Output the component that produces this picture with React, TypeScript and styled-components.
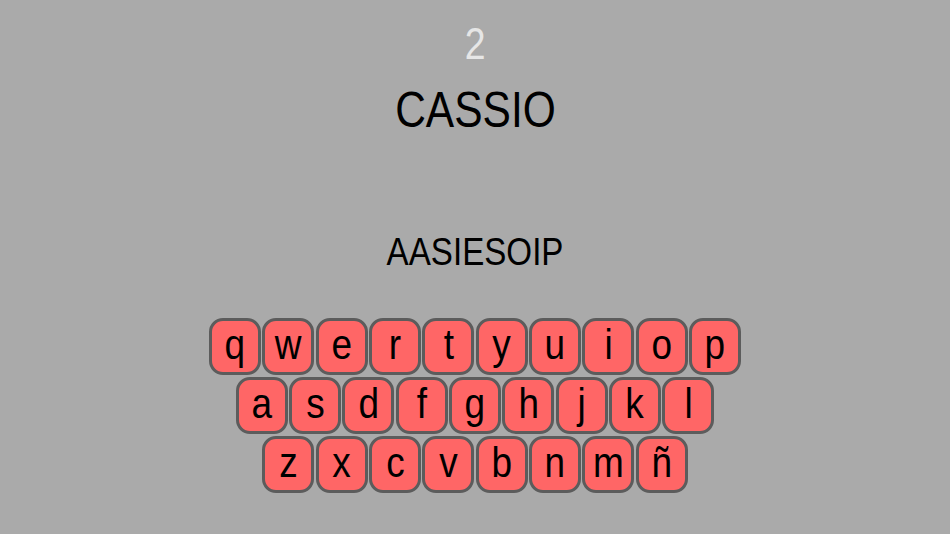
import styled, { createGlobalStyle } from "styled-components";

const GlobalStyle = createGlobalStyle`
  html, body {
    margin: 0;
    padding: 0;
    background: #aaaaaa;
  }
  body {
    font-family: "Liberation Sans", Arial, sans-serif;
  }
`;

const Screen = styled.div`
  width: 950px;
  height: 534px;
  display: flex;
  flex-direction: column;
  align-items: center;
  overflow: hidden;
`;

interface ILabel {
  size: number;
  top: number;
  color?: string;
}

const Label = styled.div<ILabel>`
  margin-top: ${(props) => props.top}px;
  font-size: ${(props) => props.size}px;
  line-height: ${(props) => props.size}px;
  height: ${(props) => props.size}px;
  color: ${(props) => props.color || "#000"};
  white-space: nowrap;
  transform: scaleX(0.85);
`;

const Keyboard = styled.div`
  margin-top: 47px;
  display: flex;
  flex-direction: column;
  align-items: center;
  gap: 2px;
`;

const Row = styled.div`
  display: flex;
  gap: 1.3px;
`;

const Key = styled.button`
  box-sizing: border-box;
  width: 52px;
  height: 57px;
  padding: 0;
  border: 3px solid #5c5c5c;
  border-radius: 14px;
  background: #ff6666;
  color: #000;
  display: flex;
  align-items: center;
  justify-content: center;
  font-family: "Liberation Sans", Arial, sans-serif;
  font-size: 42px;
  line-height: 1;
  cursor: pointer;
`;

const KeyText = styled.span`
  display: inline-block;
  transform: scaleX(0.88) translateY(-2px);
`;

const rows = [
  ["q", "w", "e", "r", "t", "y", "u", "i", "o", "p"],
  ["a", "s", "d", "f", "g", "h", "j", "k", "l"],
  ["z", "x", "c", "v", "b", "n", "m", "ñ"],
];

function App() {
  return (
    <>
      <GlobalStyle />
      <Screen>
        <Label size={44} top={22} color="#e6e6e6">
          2
        </Label>
        <Label size={50} top={19}>
          CASSIO
        </Label>
        <Label size={39} top={97}>
          AASIESOIP
        </Label>
        <Keyboard>
          {rows.map((row, i) => (
            <Row key={i}>
              {row.map((letter) => (
                <Key key={letter}>
                  <KeyText>{letter}</KeyText>
                </Key>
              ))}
            </Row>
          ))}
        </Keyboard>
      </Screen>
    </>
  );
}

export default App;
